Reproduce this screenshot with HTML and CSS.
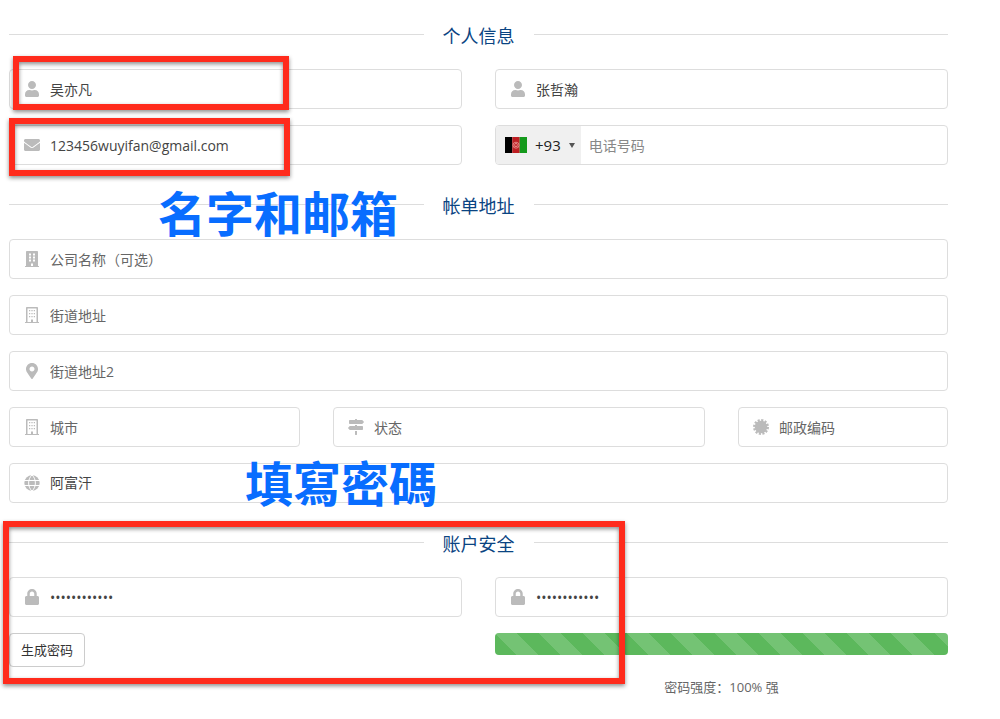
FILE: index.html
```
<!DOCTYPE html>
<html lang="zh-CN">
<head>
  <meta charset="UTF-8" />
  <meta name="viewport" content="width=device-width, initial-scale=1.0"/>
  <title>注册</title>
  <link rel="stylesheet" href="styles.css">
</head>
<body>
  <svg class="sprite" aria-hidden="true">
    <symbol id="i-user" viewBox="0 0 448 512"><path d="M224 256c70.7 0 128-57.3 128-128S294.7 0 224 0 96 57.3 96 128s57.3 128 128 128zm89.6 32h-16.7c-22.2 10.2-46.9 16-72.9 16s-50.6-5.8-72.9-16h-16.7C60.2 288 0 348.2 0 422.4V464c0 26.5 21.5 48 48 48h352c26.5 0 48-21.5 48-48v-41.6c0-74.2-60.2-134.4-134.4-134.4z"/></symbol>
    <symbol id="i-mail" viewBox="0 0 512 512"><path d="M502.3 190.8c3.9-3.1 9.7-.2 9.7 4.7V400c0 26.5-21.5 48-48 48H48c-26.5 0-48-21.5-48-48V195.6c0-5 5.7-7.8 9.7-4.7 22.4 17.4 52.1 39.5 154.1 113.6 21.1 15.4 56.7 47.8 92.2 47.6 35.7.3 72-32.8 92.3-47.6 102-74.1 131.6-96.3 154-113.7zM256 320c23.2.4 56.6-29.2 73.4-41.4 132.7-96.3 142.8-104.7 173.4-128.7 5.8-4.5 9.2-11.5 9.2-18.9v-19c0-26.5-21.5-48-48-48H48c-26.5 0-48 21.5-48 48v19c0 7.4 3.4 14.3 9.2 18.9 30.6 23.9 40.7 32.4 173.4 128.7 16.8 12.2 50.2 41.8 73.4 41.4z"/></symbol>
    <symbol id="i-building" viewBox="0 0 448 512"><path fill-rule="evenodd" d="M436 480h-20V24c0-13.3-10.7-24-24-24H56C42.7 0 32 10.7 32 24v456H12c-6.6 0-12 5.4-12 12v20h448v-20c0-6.6-5.4-12-12-12zM128 76h64v64h-64zM256 76h64v64h-64zM128 172h64v64h-64zM256 172h64v64h-64zM128 268h64v64h-64zM256 268h64v64h-64zM192 396h64v84h-64z"/></symbol>
    <symbol id="i-building-o" viewBox="0 0 448 512"><path fill-rule="evenodd" d="M436 480h-20V24c0-13.3-10.7-24-24-24H56C42.7 0 32 10.7 32 24v456H12c-6.6 0-12 5.4-12 12v20h448v-20c0-6.6-5.4-12-12-12zM80 48h288v432H256v-84h-64v84H80z"/><path d="M128 96h40v40h-40zM204 96h40v40h-40zM280 96h40v40h-40zM128 192h40v40h-40zM204 192h40v40h-40zM280 192h40v40h-40zM128 288h40v40h-40zM204 288h40v40h-40zM280 288h40v40h-40z"/></symbol>
    <symbol id="i-pin" viewBox="0 0 384 512"><path d="M172.268 501.67C26.97 291.031 0 269.413 0 192 0 85.961 85.961 0 192 0s192 85.961 192 192c0 77.413-26.97 99.031-172.268 309.67-9.535 13.774-29.93 13.773-39.464 0zM192 272c44.183 0 80-35.817 80-80s-35.817-80-80-80-80 35.817-80 80 35.817 80 80 80z"/></symbol>
    <symbol id="i-signs" viewBox="0 0 512 512"><path d="M507.31 84.69L464 41.37c-6-6-14.14-9.37-22.63-9.37H288V16c0-8.84-7.16-16-16-16h-32c-8.84 0-16 7.16-16 16v16H56c-13.25 0-24 10.75-24 24v80c0 13.25 10.75 24 24 24h385.37c8.49 0 16.62-3.37 22.63-9.37l43.31-43.31c6.25-6.26 6.25-16.38 0-22.63zM224 496c0 8.84 7.16 16 16 16h32c8.84 0 16-7.16 16-16V384h-64v112zm232-272H288v-32h-64v32H70.63c-8.49 0-16.62 3.37-22.63 9.37L4.69 276.69c-6.25 6.25-6.25 16.38 0 22.63L48 342.63c6 6 14.14 9.37 22.63 9.37H456c13.25 0 24-10.75 24-24v-80c0-13.25-10.75-24-24-24z"/></symbol>
    <symbol id="i-badge" viewBox="-16 -16 32 32"><circle r="12.5"/><circle r="13.5" fill="none" stroke="#bbb" stroke-width="5" stroke-dasharray="4.2 2.868"/></symbol>
    <symbol id="i-globe" viewBox="0 0 16 16"><circle cx="8" cy="8" r="7.7"/><path fill="none" stroke="#fff" stroke-width="1" d="M0 5.500h16M0 10.500h16M8 0C3.500 4 3.500 12 8 16M8 0c4.500 4 4.500 12 0 16"/></symbol>
    <symbol id="i-lock" viewBox="0 0 448 512"><path d="M400 224h-24v-72C376 68.2 307.8 0 224 0S72 68.2 72 152v72H48c-26.5 0-48 21.5-48 48v192c0 26.5 21.5 48 48 48h352c26.5 0 48-21.5 48-48V272c0-26.5-21.5-48-48-48zm-104 0H152v-72c0-39.7 32.3-72 72-72s72 32.3 72 72v72z"/></symbol>
  </svg>

  <form class="container">
    <h2 class="sub-heading">个人信息</h2>
    <div class="row">
      <label class="field half"><svg class="icon"><use href="#i-user"/></svg><input type="text" value="吴亦凡" aria-label="名字"></label>
      <label class="field half"><svg class="icon"><use href="#i-user"/></svg><input type="text" value="张哲瀚" aria-label="姓氏"></label>
      <label class="field half"><svg class="icon"><use href="#i-mail"/></svg><input type="email" value="123456wuyifan@gmail.com" aria-label="邮箱"></label>
      <div class="field half phone">
        <button type="button" class="dial-code">
          <svg class="flag" viewBox="0 0 22 16">
            <path fill="#000" d="M0 0h7.300v16H0z"/><path fill="#be1e23" d="M7.300 0h7.400v16H7.300z"/><path fill="#159a1c" d="M14.700 0H22v16h-7.300z"/>
            <g fill="none" stroke="#f0a8a4" stroke-width=".7"><circle cx="11" cy="8.200" r="3"/><path d="M9.800 9.500V7.200L11 6l1.200 1.200v2.300z"/></g>
          </svg>
          <span>+93</span>
          <span class="caret"></span>
        </button>
        <input type="tel" class="tel" placeholder="电话号码" aria-label="电话号码">
      </div>
    </div>

    <h2 class="sub-heading">帐单地址</h2>
    <div class="row">
      <label class="field full"><svg class="icon"><use href="#i-building"/></svg><input type="text" placeholder="公司名称（可选）" aria-label="公司名称"></label>
      <label class="field full"><svg class="icon"><use href="#i-building-o"/></svg><input type="text" placeholder="街道地址" aria-label="街道地址"></label>
      <label class="field full"><svg class="icon"><use href="#i-pin"/></svg><input type="text" placeholder="街道地址2" aria-label="街道地址2"></label>
      <label class="field city"><svg class="icon"><use href="#i-building-o"/></svg><input type="text" placeholder="城市" aria-label="城市"></label>
      <label class="field state"><svg class="icon"><use href="#i-signs"/></svg><input type="text" placeholder="状态" aria-label="状态"></label>
      <label class="field postcode"><svg class="icon"><use href="#i-badge"/></svg><input type="text" placeholder="邮政编码" aria-label="邮政编码"></label>
      <label class="field full"><svg class="icon"><use href="#i-globe"/></svg><select aria-label="国家"><option>阿富汗</option></select></label>
    </div>

    <h2 class="sub-heading">账户安全</h2>
    <div class="row">
      <label class="field half"><svg class="icon"><use href="#i-lock"/></svg><input type="password" value="abcd1234efgh" aria-label="密码"></label>
      <label class="field half"><svg class="icon"><use href="#i-lock"/></svg><input type="password" value="abcd1234efgh" aria-label="确认密码"></label>
      <div class="half">
        <button type="button" class="btn">生成密码</button>
      </div>
      <div class="half">
        <div class="progress"><div class="progress-bar" style="width: 100%"></div></div>
        <p class="strength">密码强度：100% 强</p>
      </div>
    </div>

    <!-- tutorial marks over the form -->
    <div class="mark mark-name"></div>
    <div class="mark mark-email"></div>
    <div class="mark mark-password"></div>
    <div class="note note-name">名字和邮箱</div>
    <div class="note note-password" lang="zh-TW">填寫密碼</div>
  </form>
</body>
</html>
```
FILE: styles.css
```
* {
  box-sizing: border-box;
}

body {
  margin: 0;
  background: #fff;
  color: #444;
  font-family: "Open Sans", "Noto Sans CJK SC", sans-serif;
  font-size: 14px;
  line-height: 20px;
}

.sprite {
  display: none;
}

.container {
  position: relative;
  padding: 24px 52px 20px 9px;
}

/* headings with a rule on both sides */
.sub-heading {
  display: flex;
  align-items: center;
  gap: 19px;
  margin: 0 0 21px;
  color: #0a4482;
  font-size: 18px;
  font-weight: 400;
  line-height: 24px;
}

.sub-heading::before,
.sub-heading::after {
  content: "";
  flex: 1;
  height: 1px;
  margin-bottom: 4px;
  background: #ddd;
}

.row {
  display: grid;
  grid-template-columns: repeat(12, minmax(0, 1fr));
  gap: 16px 33px;
}

.row + .sub-heading {
  margin-top: 29px;
}

.full { grid-column: span 12; }
.half { grid-column: span 6; }
.city { grid-column: span 4; }
.state { grid-column: span 5; }
.postcode { grid-column: span 3; }

.field {
  display: flex;
  align-items: center;
  height: 40px;
  border: 1px solid #ddd;
  border-radius: 4px;
  background: #fff;
  overflow: hidden;
}

.icon {
  flex: none;
  width: 16px;
  height: 16px;
  margin: 0 10px 0 14px;
  fill: #bbb;
}

.field input,
.field select {
  flex: 1;
  min-width: 0;
  height: 100%;
  padding: 0;
  border: 0;
  outline: none;
  background: none;
  color: #444;
  font: inherit;
  appearance: none;
}

.field input::placeholder {
  color: #666;
}

.dial-code {
  display: flex;
  align-items: center;
  height: 100%;
  padding: 0 6px 0 9px;
  border: 0;
  background: #f0f0f0;
  color: #222;
  font: inherit;
  font-size: 15px;
}

.flag {
  width: 22px;
  height: 16px;
  margin-right: 8px;
}

.caret {
  margin-left: 8px;
  border: 3px solid transparent;
  border-top: 5px solid #555;
  border-bottom: 0;
}

.field .tel {
  padding-left: 8px;
}

.field .tel::placeholder {
  color: #888;
}

.btn {
  height: 34px;
  padding: 0 11px;
  border: 1px solid #ccc;
  border-radius: 4px;
  background: #fff;
  color: #333;
  font: inherit;
  font-size: 13px;
}

.progress {
  height: 22px;
  border-radius: 4px;
  background: #f5f5f5;
  overflow: hidden;
}

.progress-bar {
  height: 100%;
  background-color: #5cb85c;
  background-image: linear-gradient(45deg, rgba(255, 255, 255, 0.15) 25%, transparent 25%, transparent 50%, rgba(255, 255, 255, 0.15) 50%, rgba(255, 255, 255, 0.15) 75%, transparent 75%, transparent);
  background-size: 44px 44px;
}

.strength {
  margin: 22px 0 0;
  color: #666;
  font-size: 13px;
  text-align: center;
}

.mark {
  position: absolute;
  border: 6px solid #ff2b1c;
  filter: drop-shadow(0 2px 2px rgba(0, 0, 0, 0.45));
  pointer-events: none;
}

.mark-name {
  left: 13px;
  top: 56px;
  width: 276px;
  height: 54px;
}

.mark-email {
  left: 9px;
  top: 118px;
  width: 281px;
  height: 58px;
}

.mark-password {
  left: 3px;
  top: 521px;
  width: 622px;
  height: 163px;
}

.note {
  position: absolute;
  color: #086dff;
  font-family: "Noto Sans CJK SC", sans-serif;
  font-size: 48px;
  font-weight: 700;
  line-height: 56px;
  white-space: nowrap;
}

.note-name {
  left: 158px;
  top: 183px;
}

.note-password {
  left: 245px;
  top: 453px;
  font-family: "Noto Sans CJK TC", sans-serif;
}
```
